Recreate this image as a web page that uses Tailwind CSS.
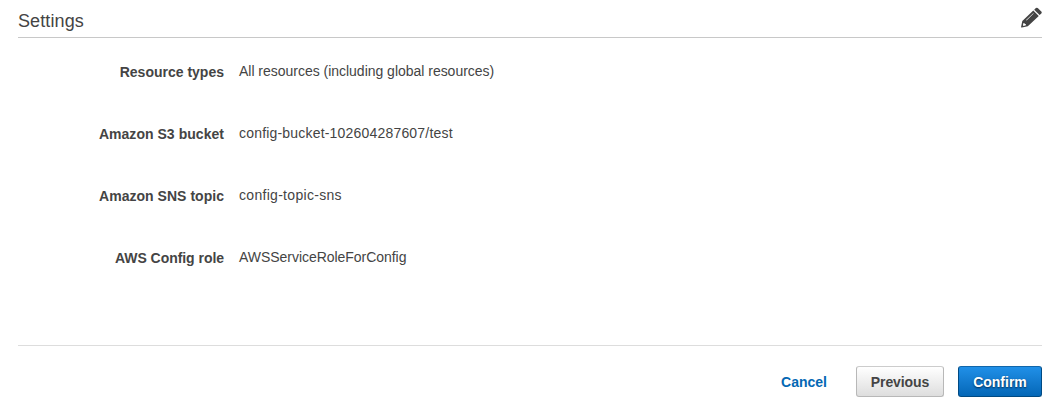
<!DOCTYPE html>
<html lang="en">
<head>
<meta charset="utf-8">
<title>Settings</title>
<script src="https://cdn.jsdelivr.net/npm/@tailwindcss/browser@4"></script>
</head>
<body class="bg-white font-['Liberation_Sans',Arial,sans-serif] text-sm text-[#444]">
<main class="flex h-[414px] flex-col px-4 pl-[18px]">
  <header class="flex h-[38px] justify-between border-b border-[#c8c8c8]">
    <h1 class="pt-2 text-[18px] leading-[26px] tracking-[0.1px]">Settings</h1>
    <svg class="mt-[7px] h-[22px] w-[22px]" viewBox="0 0 22 22" fill="#444" aria-label="Edit">
      <path d="M14.200 2.700 15.900 1.100Q16.800.3 17.700 1.100L21.300 4.600Q22.200 5.500 21.300 6.400L19.600 8Z"/>
      <path fill-rule="evenodd" d="M13.300 3.500 18.800 8.900 7.800 19.300 1.900 20.600Q.9 20.700 1.100 19.700L2.300 13.900ZM13.300 6.200 6.100 13 6.500 13.400 13.700 6.600ZM3.500 15.900 2.900 18.200 3.600 18.900 5.900 18.300 5.800 17.100 4.600 17 4.500 15.900Z"/>
    </svg>
  </header>
  <dl class="grid grid-cols-[206px_1fr] auto-rows-[62px] gap-x-[15px] pt-[23px] leading-5">
    <dt class="pt-px text-right font-bold">Resource types</dt><dd class="tracking-[-0.02px]">All resources (including global resources)</dd>
    <dt class="pt-px text-right font-bold tracking-[0.04px]">Amazon S3 bucket</dt><dd class="tracking-[0.19px]">config-bucket-102604287607/test</dd>
    <dt class="pt-px text-right font-bold tracking-[0.03px]">Amazon SNS topic</dt><dd class="tracking-[0.3px]">config-topic-sns</dd>
    <dt class="pt-px text-right font-bold tracking-[-0.04px]">AWS Config role</dt><dd class="tracking-[-0.04px]">AWSServiceRoleForConfig</dd>
  </dl>
  <footer class="mt-auto flex h-[69px] items-start justify-end border-t border-[#ddd] pt-5 font-bold">
    <a class="mr-[29px] leading-8 text-[#0468b4]">Cancel</a>
    <button class="mr-3.5 h-[31px] w-[88px] rounded-[3px] border border-[#b8b8b8] border-t-[#ccc] bg-linear-to-b from-white to-[#dedede] leading-[30px] tracking-[-0.1px]">Previous</button>
    <button class="h-[31px] w-[84px] rounded-[3px] border border-[#004a83] border-t-[#1166aa] bg-linear-to-b from-[#2090e8] to-[#0467b7] leading-[30px] text-white text-shadow-[0_1px_2px_#002b50]">Confirm</button>
  </footer>
</main>
</body>
</html>
